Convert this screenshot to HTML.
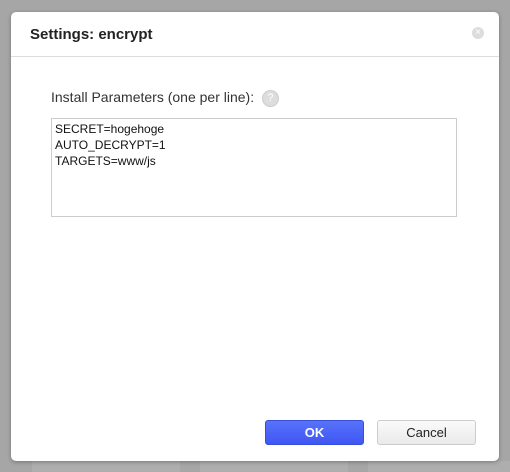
<!DOCTYPE html>
<html><head><style>
body{margin:0;width:510px;height:472px;background:#a6a6a6;position:relative;overflow:hidden;font-family:"Liberation Sans",sans-serif}
.bg{position:absolute;top:461px;height:11px;background:#aeaeae}
.dlg{position:absolute;left:11px;top:12px;width:488px;height:449px;background:#fff;border-radius:5px;box-shadow:0 1px 4px rgba(0,0,0,.3)}
.hd{height:44px;border-bottom:1px solid #ddd;position:relative}
.hd h1{margin:0;position:absolute;left:19px;top:14px;font-size:15px;font-weight:bold;color:#222}
.x{position:absolute;right:15px;top:15px;width:12px;height:12px;border-radius:50%;background:#ddd;color:#fff;font-size:10px;line-height:12px;text-align:center}
.lbl{position:absolute;left:40px;top:77px;font-size:14px;color:#333}
.q{display:inline-block;width:15px;height:15px;border-radius:50%;background:#ddd;border:1px solid #ccc;color:#fff;font-size:11px;line-height:15px;text-align:center;vertical-align:middle;margin-left:4px}
.ta{position:absolute;left:40px;top:106px;width:406px;height:99px;border:1px solid #ccc;font-size:12px;line-height:16px;color:#111;padding:2px 3px;box-sizing:border-box}
.ok{position:absolute;left:254px;top:408px;width:99px;height:25px;border-radius:3px;background:linear-gradient(#5872fb,#3f57f3);border:1px solid #3a4fd8;box-sizing:border-box;color:#fff;font-size:13px;font-weight:bold;text-align:center;line-height:23px}
.cn{position:absolute;left:366px;top:408px;width:99px;height:25px;border-radius:3px;background:linear-gradient(#fafafa,#eaeaea);border:1px solid #ccc;box-sizing:border-box;color:#222;font-size:13px;text-align:center;line-height:23px}
</style></head><body>
<div class="bg" style="left:32px;width:148px"></div>
<div class="bg" style="left:200px;width:148px"></div>
<div class="bg" style="left:368px;width:142px"></div>
<div class="dlg">
<div class="hd"><h1>Settings: encrypt</h1><div class="x">×</div></div>
<div class="lbl">Install Parameters (one per line): <span class="q">?</span></div>
<div class="ta">SECRET=hogehoge<br>AUTO_DECRYPT=1<br>TARGETS=www/js</div>
<div class="ok">OK</div>
<div class="cn">Cancel</div>
</div>
</body></html>
